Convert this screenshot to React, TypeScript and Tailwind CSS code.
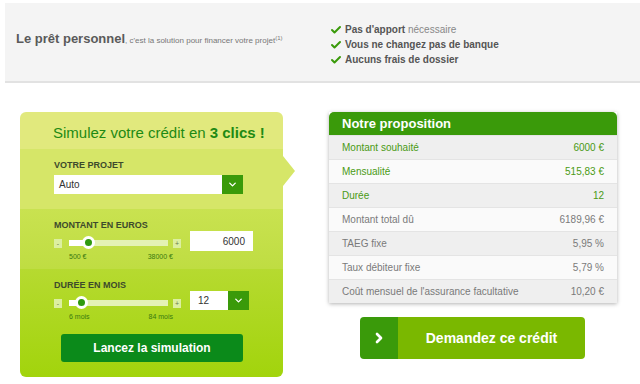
import { Check, ChevronDown, ChevronRight } from "lucide-react";

const ROWS = [
  { label: "Montant souhaité", value: "6000 €", green: true },
  { label: "Mensualité", value: "515,83 €", green: true },
  { label: "Durée", value: "12", green: true },
  { label: "Montant total dû", value: "6189,96 €", green: false },
  { label: "TAEG fixe", value: "5,95 %", green: false },
  { label: "Taux débiteur fixe", value: "5,79 %", green: false },
  { label: "Coût mensuel de l'assurance facultative", value: "10,20 €", green: false },
];

function Slider({ pos, min, max }: { pos: number; min: string; max: string }) {
  return (
    <div className="w-[128px]">
      <div className="flex h-[20px] items-center">
        <div className="flex h-[9px] w-[8px] items-center justify-center bg-[#dcefa0] text-[7px] leading-none text-[#6a7a4a]">-</div>
        <div className="relative ml-[7px] h-[6px] w-[99px] bg-[#e4f2b4]">
          <div className="absolute left-0 top-0 h-[6px] bg-white" style={{ width: pos }} />
          <div
            className="absolute top-[-4px] h-[13px] w-[13px] rounded-full border-[3px] border-white bg-[#2f9a10]"
            style={{ left: pos - 6 }}
          />
        </div>
        <div className="ml-[5px] flex h-[9px] w-[8px] items-center justify-center bg-[#dcefa0] text-[7px] leading-none text-[#6a7a4a]">+</div>
      </div>
      <div className="flex justify-between pl-[15px] pr-[9px] text-[7px] leading-none text-[#3a7a10]">
        <span>{min}</span>
        <span>{max}</span>
      </div>
    </div>
  );
}

export default function App() {
  return (
    <div className="h-[384px] w-[640px] overflow-hidden bg-white font-['Liberation_Sans',Arial,sans-serif]">
      <div className="pt-[3px] pl-[5px]">
        <div className="flex h-[80px] border-b-2 border-[#e2e2e2] bg-[#f4f4f4]">
          <div className="w-[325px] pl-[11px] pt-[23px] text-[#5a5a5a]">
            <span className="text-[13px] font-bold">Le prêt personnel</span>
            <span className="text-[8px] text-[#777]">, c'est la solution pour financer votre projet</span>
            <sup className="text-[6px] text-[#777]">(1)</sup>
          </div>
          <div className="flex flex-col pt-[19px] text-[10px] leading-none text-[#555]">
            <div className="flex h-[15px] items-center gap-[3px]">
              <Check size={12} strokeWidth={4} className="text-[#3a9a0a]" />
              <span><b>Pas d'apport</b> <span className="text-[#888]">nécessaire</span></span>
            </div>
            <div className="flex h-[15px] items-center gap-[3px]">
              <Check size={12} strokeWidth={4} className="text-[#3a9a0a]" />
              <b>Vous ne changez pas de banque</b>
            </div>
            <div className="flex h-[15px] items-center gap-[3px]">
              <Check size={12} strokeWidth={4} className="text-[#3a9a0a]" />
              <b>Aucuns frais de dossier</b>
            </div>
          </div>
        </div>
      </div>

      <div className="flex pt-[29px]">
        <div className="relative ml-[20px] w-[263px]">
          <div className="overflow-hidden rounded-[6px]">
            <div className="h-[37px] bg-[#e1e97d] pl-[33px] pt-[13px] text-[15px] leading-none text-[#1e8a14]">
              Simulez votre crédit en <b>3 clics !</b>
            </div>
            <div className="h-[60px] bg-[#d6e668] pl-[34px] pt-[12px]">
              <div className="text-[9px] font-bold leading-none text-[#3d4a2c]">VOTRE PROJET</div>
              <div className="mt-[5px] flex h-[19px] w-[189px]">
                <div className="flex flex-1 items-center bg-white pl-[5px] text-[10px] text-[#333]">Auto</div>
                <div className="flex w-[21px] items-center justify-center bg-[#3a9a0a]">
                  <ChevronDown size={11} strokeWidth={3} className="text-white" />
                </div>
              </div>
            </div>
            <div className="h-[60px] bg-[linear-gradient(#c9e250,#bfdd42)] pl-[34px] pt-[12px]">
              <div className="text-[9px] font-bold leading-none text-[#3d4a2c]">MONTANT EN EUROS</div>
              <div className="mt-[3px] flex gap-[8px]">
                <Slider pos={19} min="500 €" max="38000 €" />
                <div className="mt-[-2px] flex h-[20px] w-[63px] items-center justify-end bg-white pr-[8px] text-[10px] text-[#333]">6000</div>
              </div>
            </div>
            <div className="h-[108px] bg-[linear-gradient(#b6da30,#a2d40c)] pl-[34px] pt-[12px]">
              <div className="text-[9px] font-bold leading-none text-[#3d4a2c]">DURÉE EN MOIS</div>
              <div className="mt-[3px] flex gap-[8px]">
                <Slider pos={12} min="6 mois" max="84 mois" />
                <div className="mt-[-2px] flex h-[19px] w-[59px]">
                  <div className="flex flex-1 items-center bg-white pl-[8px] text-[10px] text-[#333]">12</div>
                  <div className="flex w-[21px] items-center justify-center bg-[#3a9a0a]">
                    <ChevronDown size={11} strokeWidth={3} className="text-white" />
                  </div>
                </div>
              </div>
              <div className="ml-[7px] mt-[14px] flex h-[28px] w-[182px] items-center justify-center rounded-[3px] bg-[#0b8a1a] text-[12px] font-bold text-white">
                Lancez la simulation
              </div>
            </div>
          </div>
          <div className="absolute right-[-12px] top-[44px] h-0 w-0 border-y-[15px] border-l-[12px] border-y-transparent border-l-[#d6e668]" />
        </div>

        <div className="ml-[46px] w-[288px]">
          <div className="shadow-[0_1px_4px_rgba(0,0,0,0.3)]">
            <div className="flex h-[23px] items-center rounded-t-[5px] bg-[#3a9a0a] pl-[13px] text-[13px] font-bold text-white">
              Notre proposition
            </div>
            {ROWS.map((r, i) => (
              <div
                key={r.label}
                className={`flex h-[24px] items-center justify-between border-t border-[#e4e4e4] px-[13px] text-[10px] ${
                  i % 2 === 0 ? "bg-[#efefef]" : "bg-[#fafafa]"
                } ${r.green ? "text-[#4a9a14]" : "text-[#7a7a7a]"}`}
              >
                <span>{r.label}</span>
                <span>{r.value}</span>
              </div>
            ))}
          </div>
          <div className="ml-[31px] mt-[14px] flex h-[42px] w-[225px] overflow-hidden rounded-[4px]">
            <div className="flex w-[38px] items-center justify-center bg-[#3a9a0a]">
              <ChevronRight size={16} strokeWidth={4} className="text-white" />
            </div>
            <div className="flex flex-1 items-center justify-center bg-[#7ab800] text-[14px] font-bold text-white">
              Demandez ce crédit
            </div>
          </div>
        </div>
      </div>
    </div>
  );
}
